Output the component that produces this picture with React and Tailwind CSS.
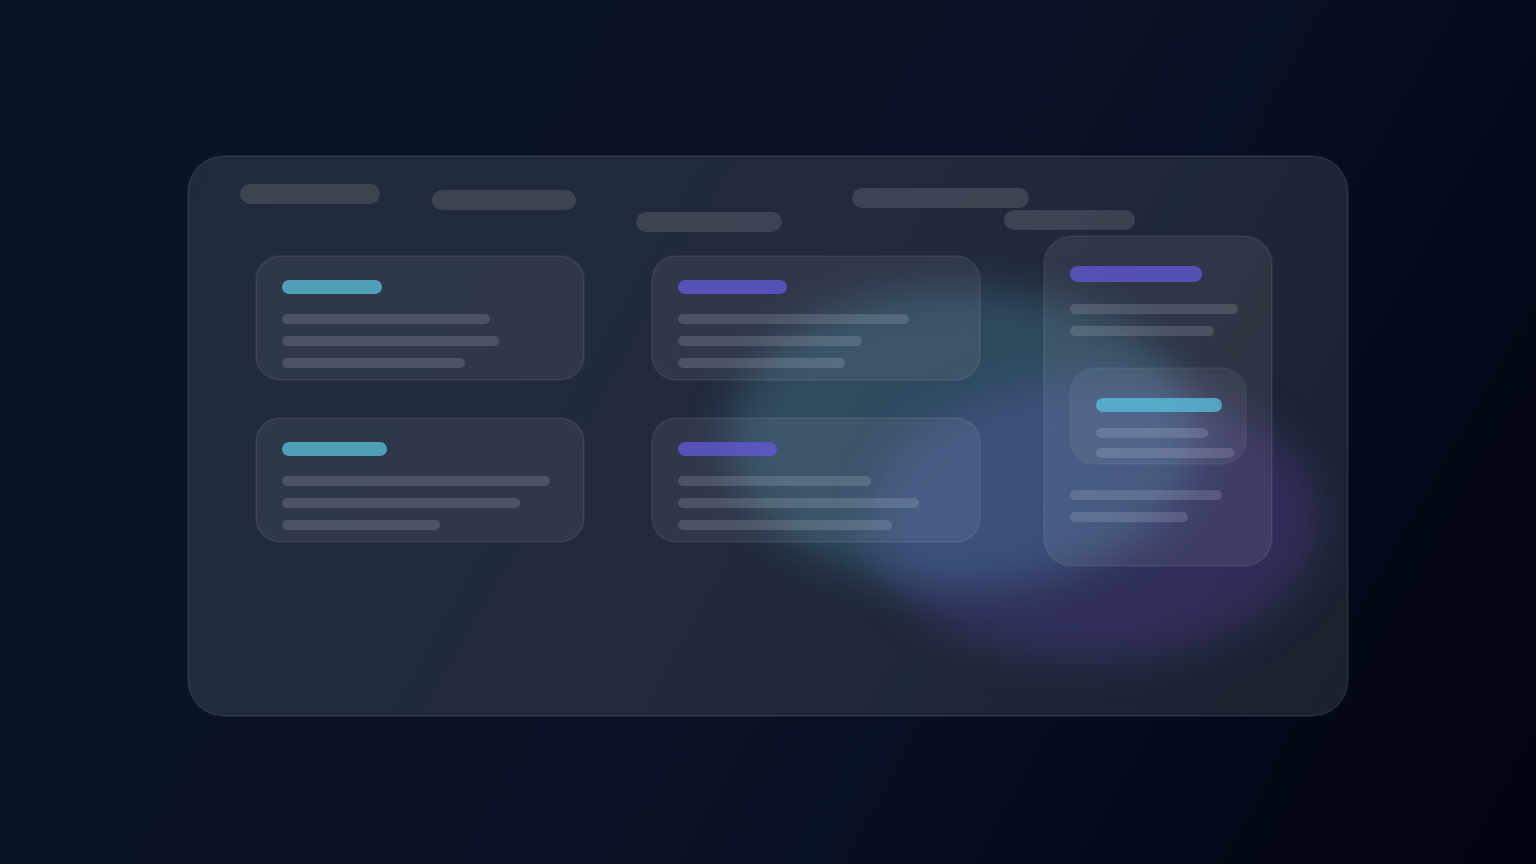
const tones = {
  teal: 'bg-[#5ac3df]/75',
  violet: 'bg-[#6359db]/75',
}

const navPills = [
  'w-[140px]',
  'ml-[52px] mt-1.5 w-[144px]',
  'ml-[60px] mt-7 w-[146px]',
  'ml-[70px] mt-1 w-[177px]',
  '-ml-[25px] mt-[26px] w-[131px]',
]

const cards = [
  { id: 1, tone: 'teal', title: 'w-[100px]', lines: ['w-[208px]', 'w-[217px]', 'w-[183px]'] },
  { id: 2, tone: 'violet', title: 'w-[109px]', lines: ['w-[231px]', 'w-[184px]', 'w-[167px]'] },
  { id: 3, tone: 'teal', title: 'w-[105px]', lines: ['w-[268px]', 'w-[238px]', 'w-[158px]'] },
  { id: 4, tone: 'violet', title: 'w-[99px]', lines: ['w-[193px]', 'w-[241px]', 'w-[214px]'] },
]

const Line = ({ width }) => (
  <div className={`h-2.5 max-w-full rounded-full bg-[#f4f4ff]/15 ${width}`}></div>
)

const Card = ({ card }) => (
  <article className="rounded-3xl bg-[#f4f4ff]/[0.07] px-[26px] pt-6 pb-3 ring-1 inset-ring-1 ring-white/5 inset-ring-white/7">
    <div className={`h-3.5 rounded-full ${tones[card.tone]} ${card.title}`}></div>
    <div className="mt-5 flex flex-col gap-3">
      {card.lines.map((width) => (
        <Line key={width} width={width} />
      ))}
    </div>
  </article>
)

const Rail = () => (
  <aside className="w-[228px] shrink-0 rounded-[28px] bg-[#f4f4ff]/[0.08] px-[26px] pt-[30px] pb-11 ring-1 inset-ring-1 ring-white/5 inset-ring-white/7">
    <div className={`h-4 w-[132px] rounded-full ${tones.violet}`}></div>
    <div className="mt-[22px] flex flex-col gap-3">
      <Line width="w-[168px]" />
      <Line width="w-[144px]" />
    </div>

    {/* Nested card */}
    <div className="mt-8 rounded-3xl bg-white/6 px-[26px] pt-[30px] pb-1.5 ring-1 inset-ring-1 ring-white/4 inset-ring-white/4">
      <div className={`h-3.5 w-[126px] rounded-full ${tones.teal}`}></div>
      <div className="mt-4 -mr-4 flex flex-col gap-2.5">
        <Line width="w-[112px]" />
        <Line width="w-[138px]" />
      </div>
    </div>

    <div className="mt-[26px] flex flex-col gap-3">
      <Line width="w-[152px]" />
      <Line width="w-[118px]" />
    </div>
  </aside>
)

// Blurred colour blobs behind the glass
const Glow = () => (
  <div className="pointer-events-none absolute inset-0" aria-hidden="true">
    <div className="absolute top-[222px] right-[26px] h-[284px] w-[452px] rounded-[50%] bg-[#7055de]/22 blur-[20px]"></div>
    <div className="absolute top-[132px] right-[150px] h-[300px] w-[470px] rounded-[50%] bg-[#5cb8dc]/23 blur-[20px]"></div>
  </div>
)

const App = () => {
  return (
    <main className="flex min-h-screen items-center justify-center bg-[linear-gradient(119.4deg,#071424_0%,#0a1324_30%,#0b1225_50%,#071022_64%,#030818_82%,#02050f_100%)] px-6 pt-2">
      <section className="relative w-full max-w-[1160px] overflow-hidden rounded-[36px] bg-[#f8fcff]/[0.1] pt-7 pb-[150px] ring-1 inset-ring-1 ring-white/7 inset-ring-white/8">
        <Glow />

        <div className="relative">
          <header className="flex items-start px-[52px]">
            {navPills.map((pill) => (
              <div key={pill} className={`h-5 shrink-0 rounded-full bg-white/12 ${pill}`}></div>
            ))}
          </header>

          <div className="mt-1 flex items-start gap-16 pr-[76px] pl-[68px]">
            <div className="mt-5 grid flex-1 grid-cols-2 gap-x-[68px] gap-y-[38px]">
              {cards.map((card) => (
                <Card key={card.id} card={card} />
              ))}
            </div>
            <Rail />
          </div>
        </div>
      </section>
    </main>
  )
}

export default App
